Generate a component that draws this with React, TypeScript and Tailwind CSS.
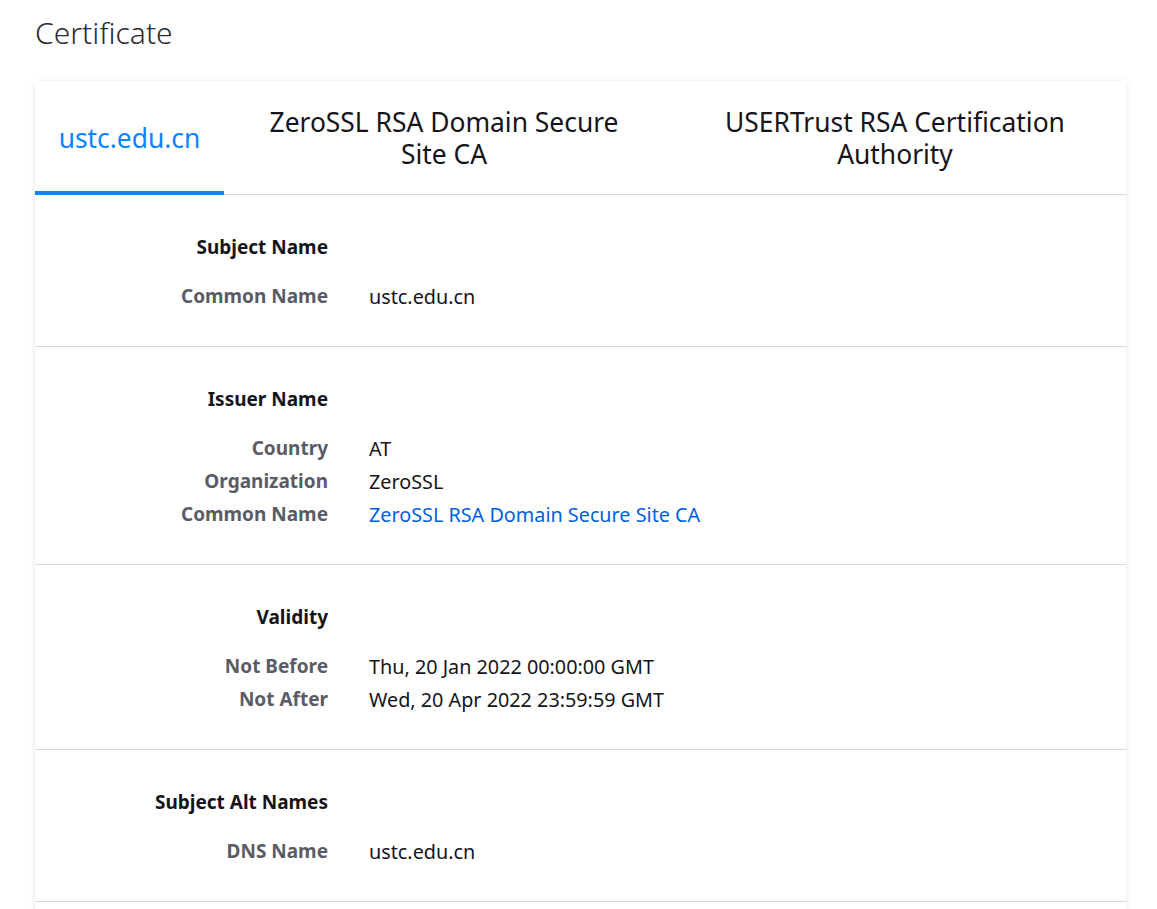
const font = { fontFamily: '"Noto Sans", "Open Sans", sans-serif' };

type Row = { label: string; value: string; link?: boolean };

const sections: { title: string; rows: Row[] }[] = [
  { title: "Subject Name", rows: [{ label: "Common Name", value: "ustc.edu.cn" }] },
  {
    title: "Issuer Name",
    rows: [
      { label: "Country", value: "AT" },
      { label: "Organization", value: "ZeroSSL" },
      { label: "Common Name", value: "ZeroSSL RSA Domain Secure Site CA", link: true },
    ],
  },
  {
    title: "Validity",
    rows: [
      { label: "Not Before", value: "Thu, 20 Jan 2022 00:00:00 GMT" },
      { label: "Not After", value: "Wed, 20 Apr 2022 23:59:59 GMT" },
    ],
  },
  { title: "Subject Alt Names", rows: [{ label: "DNS Name", value: "ustc.edu.cn" }] },
];

const Section = ({ title, rows }: { title: string; rows: Row[] }) => {
  return (
    <div className="border-b border-[#d7d7db] pt-[36px] pb-[33px]">
      <div className="grid grid-cols-[293px_1fr] gap-x-[41px]">
        <div className="text-right text-[19px] leading-[33px] font-bold text-[#15141a]">{title}</div>
        <div />
      </div>
      <div className="mt-4 grid grid-cols-[293px_1fr] gap-x-[41px]">
        {rows.map((r, i) => (
          <div key={i} className="contents">
            <div className="text-right text-[19px] leading-[33px] font-bold text-[#5b5b66]">{r.label}</div>
            <div className={`text-[19.8px] leading-[33px] ${r.link ? "text-[#0060df]" : "text-[#15141a]"}`}>
              {r.value}
            </div>
          </div>
        ))}
      </div>
    </div>
  );
};

export default function App() {
  return (
    <div className="min-h-screen w-full overflow-hidden bg-white" style={font}>
      <div className="pl-[35px] pr-[31px] pt-[13px]">
        <h1 className="text-[30px] leading-[40px] font-light text-[#2b2a33]">Certificate</h1>
        <div className="mt-[28px] bg-white shadow-[0_1px_6px_rgba(12,12,13,0.1)]">
          <div className="flex h-[114px] border-b border-[#d7d7db]">
            <div className="relative flex w-[189px] items-center justify-center text-[26.4px] leading-[32px] text-[#0a84ff]">
              ustc.edu.cn
              <div className="absolute bottom-[-1px] left-0 right-0 h-[4px] bg-[#0a84ff]" />
            </div>
            <div className="flex w-[440px] items-center justify-center px-[40px] text-center text-[26.4px] leading-[32px] text-[#15141a]">
              ZeroSSL RSA Domain Secure Site CA
            </div>
            <div className="flex flex-1 items-center justify-center px-[40px] text-center text-[26.4px] leading-[32px] text-[#15141a]">
              USERTrust RSA Certification Authority
            </div>
          </div>
          {sections.map((s) => (
            <Section key={s.title} title={s.title} rows={s.rows} />
          ))}
          <div className="h-[40px]" />
        </div>
      </div>
    </div>
  );
}
